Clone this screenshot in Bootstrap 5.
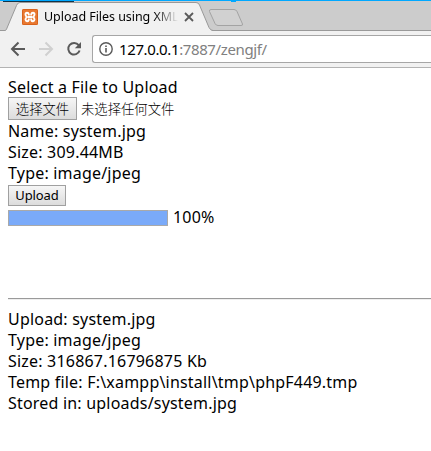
<!DOCTYPE html>
<html lang="zh-CN">
<head>
<meta charset="utf-8">
<meta name="viewport" content="width=device-width, initial-scale=1">
<title>Upload Files using XMLHttpRequest</title>
<link href="https://cdn.jsdelivr.net/npm/bootstrap@5.3.0/dist/css/bootstrap.min.css" rel="stylesheet">
<style>
body{font-family:"Noto Sans","Noto Sans CJK SC",sans-serif;font-size:16px;letter-spacing:.2px;line-height:21px;color:#000;background:#fff}
.tabstrip{height:31px;background:#ccc}
.tabshape{left:0;top:0}
.tabtitle{font-size:12.5px;letter-spacing:-.05px;line-height:18px;width:138px;margin:0 -5px 0 6px;-webkit-mask-image:linear-gradient(90deg,#000 110px,transparent 134px);mask-image:linear-gradient(90deg,#000 110px,transparent 134px)}
.tabrow{height:31px;padding:3px 0 0 22px}
.tabclose{margin-left:7px}
.toolbar{height:37px;background:#f1f1f1;border-bottom:1px solid #b3b3b3;padding:4px 0 0 8px}
.address{height:28px;border:1px solid #a6a6a6;border-right:0;border-radius:3px 0 0 3px;padding-left:6px;margin-left:8px}
.url{font-size:15px;letter-spacing:-.38px;color:#808080;margin-left:6px}
.page{padding:9px 0 0 8px}
.line{height:21px}
.native{border:1px solid #a0a0a0;border-radius:0;background:linear-gradient(#f6f6f6,#dcdcdc);color:#000;line-height:19px;padding:0 6px;letter-spacing:0}
.native:hover{color:#000}
.filerow{height:24px;margin-top:-1px}
.pick{height:23px;width:69px;font-size:13.33px;font-weight:300;padding-top:1px}
.picked{font-size:13.33px;letter-spacing:0;font-weight:300;padding-top:2px}
.send{height:21px;width:58px;font-size:13px;letter-spacing:-.1px;margin-top:1px}
.meter{width:160px;height:16px;border:1px solid #a9a9a9;border-radius:0;background:#fff}
.meter .progress-bar{background:#7aaaf9}
.meter-label{margin:-2px 0 0 5px}
.rule{height:2px;border-top:1px solid #9a9a9a;border-bottom:1px solid #eee;margin:72px 0 9px}
</style>
</head>
<body>
<header>
  <div class="tabstrip position-relative overflow-hidden">
    <svg class="tabshape position-absolute" width="431" height="31" viewBox="0 0 431 31" aria-hidden="true">
      <path d="M0 30.5H431" stroke="#999"/>
      <path d="M4.500 31C6 30.500 6.500 29.500 7 28L16.500 5.500Q17.500 2.500 20 2.500H196Q198.500 2.500 199.500 5L209 27.500Q210.500 30.500 213 31Z" fill="#f1f1f1"/>
      <path d="M0 30.500H4.500C6 30.500 6.500 29.500 7 28L16.500 5.500Q17.500 2.500 20 2.500H196Q198.500 2.500 199.500 5L209 27.500Q210.500 30.500 213 30.500" fill="none" stroke="#999"/>
      <path d="M211 9.500H234Q236 9.500 237 11.500L242.500 24Q243 25.500 241 25.500H218Q216 25.500 215 23.500L209.500 11.500Q209 9.500 211 9.500Z" fill="#d1d1d1" stroke="#a3a3a3"/>
      <path d="M0 .5H431" stroke="#00a8ff"/><path d="M3 1.500H74" stroke="#123348"/><path d="M231 1.500H236" stroke="#00a8ff"/>
    </svg>
    <div class="tabrow d-flex align-items-center position-relative">
      <svg width="16" height="16" viewBox="0 0 16 16" aria-hidden="true"><rect width="16" height="16" rx="1.500" fill="#e87830"/><rect x=".5" y=".5" width="15" height="15" rx="1" fill="none" stroke="#d9621c"/><path d="M6.800 6.500V5.200Q6.500 3.800 5 3.800T3.500 5.500Q3.500 7 5 8Q3.500 9 3.500 10.500T5 12.200 6.800 10.800V9.500M9.200 6.500V5.200Q9.500 3.800 11 3.800T12.500 5.500Q12.500 7 11 8Q12.500 9 12.500 10.500T11 12.200 9.200 10.800V9.500M6 8H10" fill="none" stroke="#fff" stroke-width="1.900"/></svg>
      <span class="tabtitle text-nowrap">Upload Files using XML</span>
      <svg class="tabclose" width="10" height="10" viewBox="0 0 10 10" aria-hidden="true"><path d="M1 1L9 9M9 1L1 9" stroke="#5a5a5a" stroke-width="1.800"/></svg>
    </div>
  </div>
  <div class="toolbar d-flex">
    <svg width="76" height="28" viewBox="8 35 76 28" fill="none" aria-hidden="true">
      <path d="M25 49H12.500M18.500 42.500L12 49L18.500 55.500" stroke="#5a5a5a" stroke-width="2"/>
      <path d="M39 49H51.500M45.500 42.500L52 49L45.500 55.500" stroke="#d0d0d0" stroke-width="2"/>
      <path d="M78.700 45.200A5.800 5.800 0 1 0 79.600 50.500" stroke="#5a5a5a" stroke-width="2"/><path d="M81 42V48.200H74.800Z" fill="#5a5a5a"/>
    </svg>
    <div class="address bg-white flex-grow-1 d-flex align-items-center">
      <svg width="14" height="14" viewBox="0 0 14 14" aria-hidden="true"><circle cx="7" cy="7" r="6.200" fill="none" stroke="#5a5a5a" stroke-width="1.400"/><path d="M7 6V10.500M7 3.500V5" stroke="#5a5a5a" stroke-width="1.600"/></svg>
      <span class="url"><span class="text-black">127.0.0.1</span>:7887/zengjf/</span>
    </div>
  </div>
</header>
<main class="page">
  <div class="line">Select a File to Upload</div>
  <div class="filerow d-flex align-items-start"><button class="btn native pick text-nowrap" type="button">选择文件</button><span class="picked ms-1">未选择任何文件</span></div>
  <div class="line">Name: system.jpg</div>
  <div class="line">Size: 309.44MB</div>
  <div class="line">Type: image/jpeg</div>
  <button class="btn native send d-block" type="button">Upload</button>
  <div class="d-flex align-items-center pt-1"><div class="progress meter"><div class="progress-bar w-100"></div></div><span class="meter-label lh-1">100%</span></div>
  <div class="rule"></div>
  <div class="line">Upload: system.jpg</div>
  <div class="line">Type: image/jpeg</div>
  <div class="line">Size: 316867.16796875 Kb</div>
  <div class="line">Temp file: F:\xampp\install\tmp\phpF449.tmp</div>
  <div class="line">Stored in: uploads/system.jpg</div>
</main>
<script src="https://cdn.jsdelivr.net/npm/bootstrap@5.3.0/dist/js/bootstrap.bundle.min.js"></script>
</body>
</html>
